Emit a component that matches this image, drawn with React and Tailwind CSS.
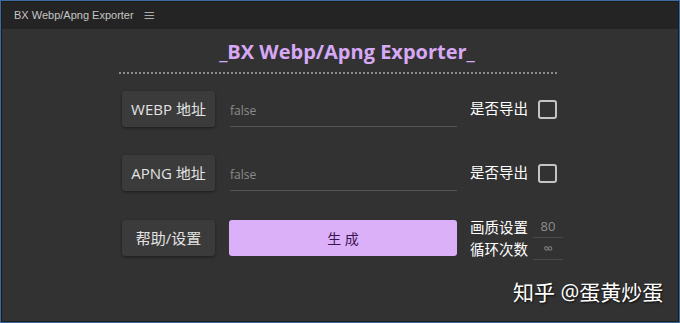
import { useState } from "react";

const sans = "font-['Segoe_UI','Open_Sans','Noto_Sans_CJK_SC',sans-serif]";

function PathRow({ label, value }) {
  const [checked, setChecked] = useState(false);
  return (
    <div className="flex items-center h-[36px]">
      <button className="w-[93px] h-[36px] rounded-[3px] bg-[#3b3b3b] shadow-[0_1px_3px_rgba(0,0,0,0.45)] text-[15px] text-[#e2e2e2]">
        {label}
      </button>
      <div className="ml-[15px] w-[227px] h-[36px] pt-[4px] border-b border-[#555555] flex items-center text-[12px] text-[#8c8c8c]">
        {value}
      </div>
      <span className="ml-[13px] w-[60px] text-[14.5px] text-white">是否导出</span>
      <button
        onClick={() => setChecked(!checked)}
        className="ml-[8px] w-[19px] h-[19px] rounded-[3px] border-2 border-[#c4c4c4]"
      >
        {checked && <span className="block w-full h-full bg-[#c4c4c4]" />}
      </button>
    </div>
  );
}

function SmallField({ label, value }) {
  return (
    <div className="flex items-end h-[22px]">
      <span className="w-[63px] text-[14.5px] leading-[20px] text-white">{label}</span>
      <div className="w-[30px] h-[21px] border-b border-[#4a4a4a] flex items-center justify-center text-[13px] text-[#8e8e8e]">
        {value}
      </div>
    </div>
  );
}

export default function App() {
  return (
    <div className={`w-[680px] h-[323px] border border-[#3b6a9e] ${sans}`}>
      <div className="relative w-full h-full border border-[#1c1c1c] bg-[#323232] flex flex-col">
        {/* Panel tab */}
        <div className="h-[27px] bg-[#242424] flex items-center pl-[12px] text-[#c6c6c6]">
          <span className="text-[11px] font-['Liberation_Sans',sans-serif]">BX Webp/Apng Exporter</span>
          <span className="ml-[9px] text-[13px] leading-none">≡</span>
        </div>

        {/* Title */}
        <div className="mt-[9px] pl-[14px] text-center text-[20px] font-bold leading-[28px] text-[#d7a9f5]">
          _BX Webp/Apng Exporter_
        </div>
        <div className="mt-[6px] ml-[117px] w-[438px] border-t-2 border-dotted border-[#8c8c8c]" />

        <div className="ml-[120px] mt-[17px] flex flex-col gap-[28px]">
          <PathRow label="WEBP 地址" value="false" />
          <PathRow label="APNG 地址" value="false" />

          <div className="flex items-center h-[36px] mt-[1px]">
            <button className="w-[93px] h-[36px] rounded-[3px] bg-[#3b3b3b] shadow-[0_1px_3px_rgba(0,0,0,0.45)] text-[15px] text-[#e2e2e2]">
              帮助/设置
            </button>
            <button className="ml-[14px] w-[228px] h-[36px] rounded-[3px] bg-[#dbb0f9] text-[14px] text-[#3a1552]">
              生 成
            </button>
            <div className="ml-[13px] flex flex-col">
              <SmallField label="画质设置" value="80" />
              <SmallField label="循环次数" value="∞" />
            </div>
          </div>
        </div>

        {/* Watermark */}
        <div className="absolute left-[511px] top-[275px] text-[21px] text-white [text-shadow:1px_1px_2px_rgba(0,0,0,0.8)]">
          知乎 @蛋黄炒蛋
        </div>
      </div>
    </div>
  );
}
